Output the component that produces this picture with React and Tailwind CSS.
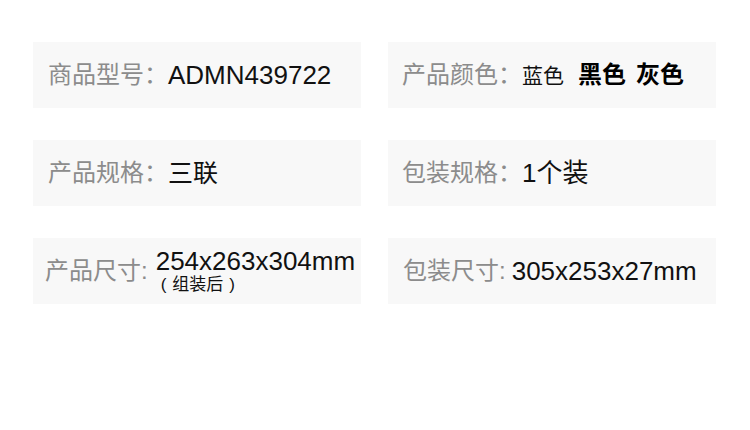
const FONT = { fontFamily: '"Liberation Sans", "Noto Sans CJK SC", sans-serif' }

function Cell({ label, children, tight, className = '' }) {
  return (
    <div className={`flex h-[66px] items-center bg-[#f8f8f8] ${className}`}>
      <span className={`text-[24px] leading-none text-[#8c8c8c] ${tight ? 'mr-[2px]' : ''}`}>{label}</span>
      {children}
    </div>
  )
}

export default function App() {
  return (
    <div className="h-[430px] w-[750px] bg-white" style={FONT}>
      <div className="grid grid-cols-[328px_328px] gap-x-[27px] gap-y-[32px] pl-[33px] pt-[42px]">
        <Cell label="商品型号：" className="pl-[15px]">
          <span className="text-[26px] leading-none text-[#111]">ADMN439722</span>
        </Cell>
        <Cell label="产品颜色：" className="pl-[14px]">
          <span className="text-[21px] leading-none text-[#111]">蓝色</span>
          <span className="ml-[14px] text-[24px] font-bold leading-none text-black">黑色</span>
          <span className="ml-[10px] text-[24px] font-bold leading-none text-black">灰色</span>
        </Cell>
        <Cell label="产品规格：" className="pl-[15px]">
          <span className="text-[25px] leading-none text-[#111]">三联</span>
        </Cell>
        <Cell label="包装规格：" className="pl-[14px]">
          <span className="text-[26px] leading-none text-[#111]">1个装</span>
        </Cell>
        <Cell label="产品尺寸:" tight className="pl-[12px]">
          <div className="ml-[6px] flex flex-col gap-[1px]">
            <span className="text-[26px] leading-[26px] text-[#111]">254x263x304mm</span>
            <span className="flex items-center pl-[5px] text-[17px] leading-[20px] text-[#111]">
              <span>(</span>
              <span className="mx-[6px]">组装后</span>
              <span>)</span>
            </span>
          </div>
        </Cell>
        <Cell label="包装尺寸:" tight className="pl-[15px]">
          <span className="ml-[4px] text-[26px] leading-none text-[#111]">305x253x27mm</span>
        </Cell>
      </div>
    </div>
  )
}
